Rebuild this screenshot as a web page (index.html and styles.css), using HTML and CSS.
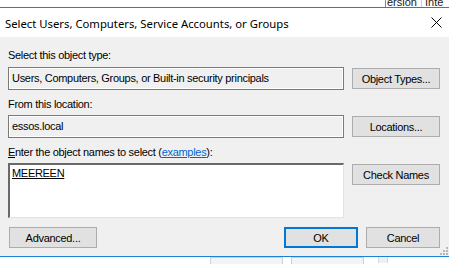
FILE: index.html
```html
<!DOCTYPE html>
<html lang="en">

<head>
    <meta charset="UTF-8">
    <title>Select Users, Computers, Service Accounts, or Groups</title>
    <link rel="stylesheet" href="styles.css">
</head>

<body>
    <div class="behind-top">
        <span class="col-a">ersion</span><span class="col-b">Inte</span>
    </div>
    <div class="dialog">
        <div class="titlebar">
            <span class="title">Select Users, Computers, Service Accounts, or Groups</span>
            <svg class="close" width="11" height="11" viewBox="0 0 11 11">
                <path d="M0.5 0.5 L10.5 10.5 M10.5 0.5 L0.5 10.5" stroke="#000" stroke-width="1" fill="none" />
            </svg>
        </div>
        <div class="body">
            <div class="label first">Select this object type:</div>
            <div class="row">
                <div class="field">Users, Computers, Groups, or Built-in security principals</div>
                <button class="btn">Object Types...</button>
            </div>
            <div class="label">From this location:</div>
            <div class="row">
                <div class="field">essos.local</div>
                <button class="btn">Locations...</button>
            </div>
            <div class="label"><u>E</u>nter the object names to select (<a href="#">examples</a>):</div>
            <div class="row">
                <div class="names"><u>MEEREEN</u></div>
                <button class="btn">Check Names</button>
            </div>
            <div class="actions">
                <button class="btn">Advanced...</button>
                <div class="spacer"></div>
                <button class="btn default">OK</button>
                <button class="btn">Cancel</button>
            </div>
            <svg class="grip" width="8" height="8" viewBox="0 0 8 8">
                <rect x="6" y="0" width="2" height="2" fill="#b8b8b8" />
                <rect x="3" y="3" width="2" height="2" fill="#b8b8b8" />
                <rect x="6" y="3" width="2" height="2" fill="#b8b8b8" />
                <rect x="0" y="6" width="2" height="2" fill="#b8b8b8" />
                <rect x="3" y="6" width="2" height="2" fill="#b8b8b8" />
                <rect x="6" y="6" width="2" height="2" fill="#b8b8b8" />
            </svg>
        </div>
    </div>
    <div class="behind-bottom">
        <div class="ghost-btn"></div>
        <div class="ghost-btn"></div>
        <div class="ghost-col"></div>
    </div>
</body>

</html>
```
FILE: styles.css
```css
html, body {
    margin: 0;
    padding: 0;
    background: #fff;
    width: 449px;
    height: 264px;
    overflow: hidden;
    font-family: "Liberation Sans", Arial, sans-serif;
    font-size: 11px;
    letter-spacing: -0.3px;
    color: #000;
}

.behind-top {
    height: 7px;
    overflow: hidden;
    display: flex;
    justify-content: flex-end;
    font-size: 11px;
    line-height: 11px;
    letter-spacing: 0;
    color: #222;
}

.behind-top span {
    margin-top: -3px;
}

.col-a {
    width: 34px;
    border-left: 1px solid #888;
    padding-left: 1px;
    border-right: 1px solid #ccc;
}

.col-b {
    width: 24px;
    padding-left: 3px;
}

.dialog {
    border-top: 1px solid #1883d7;
    border-bottom: 1px solid #1883d7;
}

.titlebar {
    height: 29px;
    background: #fff;
    display: flex;
    align-items: center;
    padding: 0 6px 0 5px;
}

.title {
    flex: 1;
    font-family: "Noto Sans", "Open Sans", sans-serif;
    font-size: 11.3px;
    letter-spacing: 0;
    margin-top: 1px;
}

.close {
    margin-right: 1px;
}

.body {
    position: relative;
    background: #f0f0f0;
    height: 219px;
    box-sizing: border-box;
    padding: 12px 9px 0 8px;
}

.label {
    height: 13px;
    line-height: 13px;
    margin-top: 8px;
    margin-bottom: 4px;
}

.label.first {
    margin-top: 0;
    margin-bottom: 5px;
}

.label a {
    color: #0066cc;
}

.row {
    display: flex;
    align-items: flex-start;
    gap: 8px;
}

.field {
    width: 336px;
    height: 23px;
    box-sizing: border-box;
    border: 1px solid #7a7a7a;
    box-shadow: inset -1px -1px 0 #fff, inset 1px 1px 0 #fff;
    padding: 3px 3px;
    line-height: 15px;
}

.names {
    width: 336px;
    height: 55px;
    box-sizing: border-box;
    background: #fff;
    border-top: 2px solid #696969;
    border-left: 2px solid #696969;
    border-right: 1px solid #e3e3e3;
    border-bottom: 1px solid #e3e3e3;
    padding: 1px 2px;
    line-height: 14px;
    color: #000;
}

.btn {
    width: 88px;
    height: 21px;
    box-sizing: border-box;
    border: 1px solid #adadad;
    background: #e1e1e1;
    font-family: "Liberation Sans", Arial, sans-serif;
    font-size: 11px;
    letter-spacing: -0.3px;
    color: #000;
    padding: 0;
    margin-top: 1px;
}

.actions {
    display: flex;
    margin-top: 9px;
    gap: 8px;
}

.actions .btn {
    margin-top: 0;
}

.actions .default {
    width: 74px;
    border: 2px solid #0078d7;
    margin-right: 0;
}

.actions .btn:last-child {
    width: 74px;
}

.actions .btn:first-child {
    margin-left: 1px;
}

.spacer {
    flex: 1;
}

.grip {
    position: absolute;
    right: 1px;
    bottom: 1px;
}

.behind-bottom {
    height: 6px;
    display: flex;
    background: #fff;
}

.ghost-btn {
    width: 71px;
    height: 6px;
    border: 1px solid #d0d0d0;
    border-bottom: none;
    margin-left: 8px;
    background: #f4f4f4;
}

.ghost-btn:first-child {
    margin-left: 210px;
}

.ghost-col {
    margin-left: 14px;
    width: 8px;
    background: #f0f0f0;
    border-left: 1px solid #d8d8d8;
    border-right: 1px solid #d8d8d8;
}
```
